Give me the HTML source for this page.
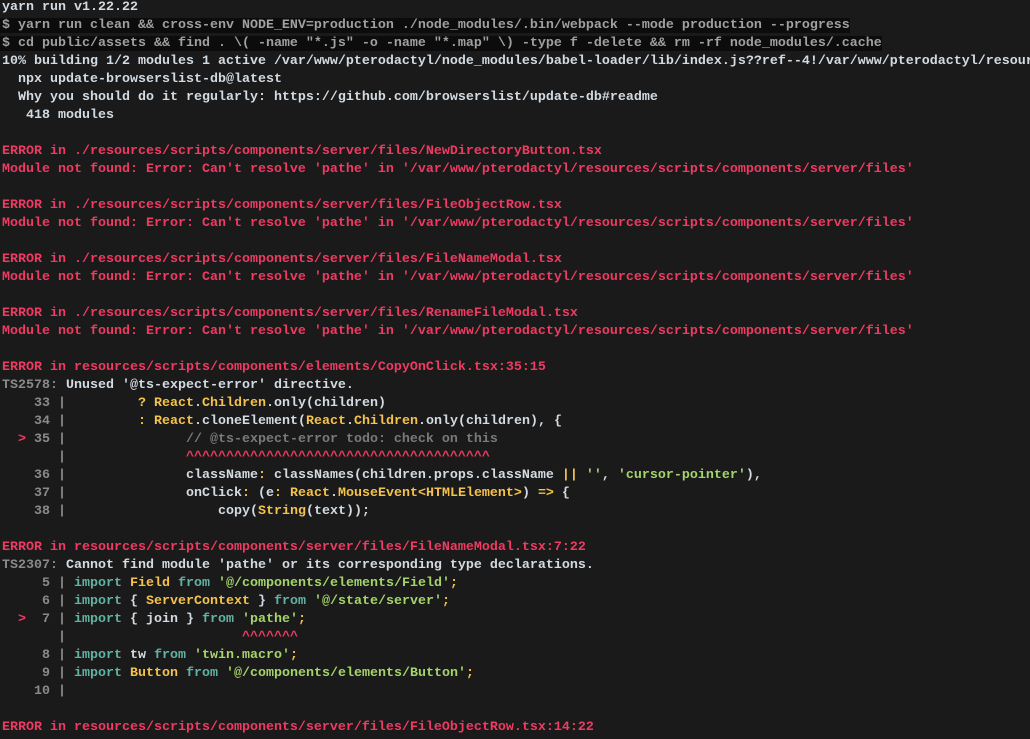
<!DOCTYPE html>
<html><head><meta charset="utf-8"><style>
html,body{margin:0;padding:0;background:#1a1a1a;width:1030px;height:739px;overflow:hidden}
pre{margin:-1px 0 0 2px;font-family:"Liberation Mono",monospace;font-size:13.33px;line-height:18px;font-weight:bold;color:#d3dbe2;white-space:pre}
.r{color:#f03a62}.g{color:#8a8a8a}.y{color:#f5c24a}.gr{color:#a5d46a}.t{color:#5fb3a3}.c{color:#7a7a7a}
.b{background:#0c0c0c;color:#a0a0a0;margin-left:-2px;padding-left:2px}
</style></head><body><pre>yarn run v1.22.22
<span class="b">$ yarn run clean &amp;&amp; cross-env NODE_ENV=production ./node_modules/.bin/webpack --mode production --progress</span>
<span class="b">$ cd public/assets &amp;&amp; find . \( -name "*.js" -o -name "*.map" \) -type f -delete &amp;&amp; rm -rf node_modules/.cache</span>
10% building 1/2 modules 1 active /var/www/pterodactyl/node_modules/babel-loader/lib/index.js??ref--4!/var/www/pterodactyl/resources
  npx update-browserslist-db@latest
  Why you should do it regularly: https://github.com/browserslist/update-db#readme
   418 modules

<span class="r">ERROR in ./resources/scripts/components/server/files/NewDirectoryButton.tsx
Module not found: Error: Can't resolve 'pathe' in '/var/www/pterodactyl/resources/scripts/components/server/files'</span>

<span class="r">ERROR in ./resources/scripts/components/server/files/FileObjectRow.tsx
Module not found: Error: Can't resolve 'pathe' in '/var/www/pterodactyl/resources/scripts/components/server/files'</span>

<span class="r">ERROR in ./resources/scripts/components/server/files/FileNameModal.tsx
Module not found: Error: Can't resolve 'pathe' in '/var/www/pterodactyl/resources/scripts/components/server/files'</span>

<span class="r">ERROR in ./resources/scripts/components/server/files/RenameFileModal.tsx
Module not found: Error: Can't resolve 'pathe' in '/var/www/pterodactyl/resources/scripts/components/server/files'</span>

<span class="r">ERROR in resources/scripts/components/elements/CopyOnClick.tsx:35:15</span>
<span class="g">TS2578:</span> Unused '@ts-expect-error' directive.
<span class="g">    33 |</span>         <span class="y">?</span> <span class="y">React</span>.<span class="y">Children</span>.only(children)
<span class="g">    34 |</span>         <span class="y">:</span> <span class="y">React</span>.cloneElement(<span class="y">React</span>.<span class="y">Children</span>.only(children), {
<span class="r">  &gt;</span><span class="g"> 35 |</span>               <span class="c">// @ts-expect-error todo: check on this</span>
<span class="g">       |</span>               <span class="r">^^^^^^^^^^^^^^^^^^^^^^^^^^^^^^^^^^^^^^</span>
<span class="g">    36 |</span>               className<span class="y">:</span> classNames(children.props.className <span class="y">||</span> <span class="gr">''</span>, <span class="gr">'cursor-pointer'</span>),
<span class="g">    37 |</span>               onClick<span class="y">:</span> (e<span class="y">:</span> <span class="y">React</span>.<span class="y">MouseEvent&lt;HTMLElement&gt;</span>) <span class="y">=&gt;</span> {
<span class="g">    38 |</span>                   copy(<span class="y">String</span>(text));

<span class="r">ERROR in resources/scripts/components/server/files/FileNameModal.tsx:7:22</span>
<span class="g">TS2307:</span> Cannot find module 'pathe' or its corresponding type declarations.
<span class="g">     5 |</span> <span class="t">import</span> <span class="y">Field</span> <span class="t">from</span> <span class="gr">'@/components/elements/Field'</span><span class="y">;</span>
<span class="g">     6 |</span> <span class="t">import</span> { <span class="y">ServerContext</span> } <span class="t">from</span> <span class="gr">'@/state/server'</span><span class="y">;</span>
<span class="r">  &gt;</span><span class="g">  7 |</span> <span class="t">import</span> { join } <span class="t">from</span> <span class="gr">'pathe'</span><span class="y">;</span>
<span class="g">       |</span>                      <span class="r">^^^^^^^</span>
<span class="g">     8 |</span> <span class="t">import</span> tw <span class="t">from</span> <span class="gr">'twin.macro'</span><span class="y">;</span>
<span class="g">     9 |</span> <span class="t">import</span> <span class="y">Button</span> <span class="t">from</span> <span class="gr">'@/components/elements/Button'</span><span class="y">;</span>
<span class="g">    10 |</span>

<span class="r">ERROR in resources/scripts/components/server/files/FileObjectRow.tsx:14:22</span>
</pre></body></html>
